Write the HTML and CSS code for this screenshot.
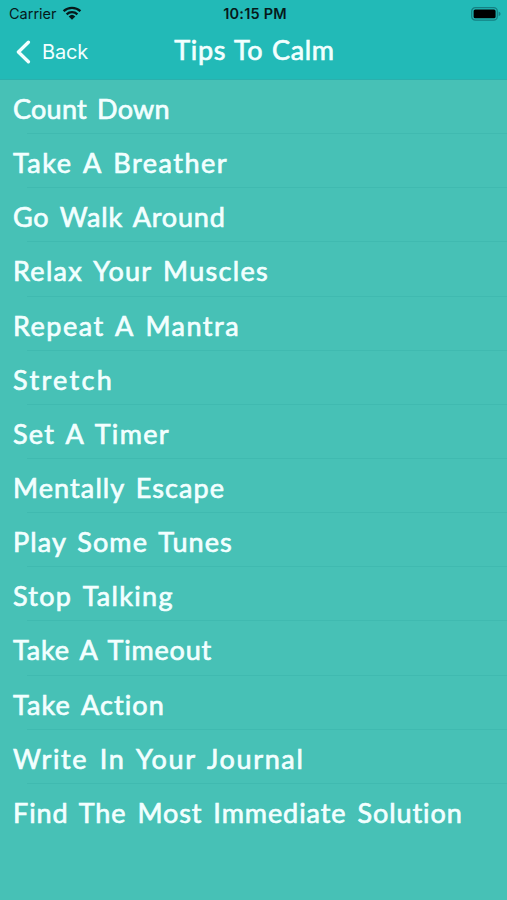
FILE: index.html
```html
<!DOCTYPE html>
<html lang="en">
<head>
    <meta charset="UTF-8">
    <meta name="viewport" content="width=device-width, initial-scale=1.0">
    <title>Tips To Calm</title>
    <link rel="stylesheet" href="styles.css">
</head>
<body>
    <header id="header">
        <div id="status">
            <div class="carrier">
                <span>Carrier</span>
                <svg width="20" height="14" viewBox="0 0 20 14">
                    <path d="M1.6 5.2A12.2 12.2 0 0 1 18.4 5.2M4.6 8.3A7.9 7.9 0 0 1 15.4 8.3" fill="none" stroke="#06191a" stroke-width="2.3"/>
                    <path d="M6.7 10.4A4.8 4.8 0 0 1 13.3 10.4L10 13.7Z" fill="#06191a"/>
                </svg>
            </div>
            <p class="time">10:15 PM</p>
            <svg class="battery" width="30" height="14" viewBox="0 0 30 14">
                <rect x="0.7" y="0.7" width="25.6" height="12.4" rx="3.6" fill="none" stroke="#158083" stroke-width="1.3"/>
                <rect x="2.6" y="2.5" width="22" height="8.8" rx="1.6" fill="#000"/>
                <path d="M27.6 4.6Q29.6 5.4 29.6 7Q29.6 8.5 27.6 9.3Z" fill="#158083"/>
            </svg>
        </div>
        <div id="nav">
            <div class="back">
                <svg width="15" height="24" viewBox="0 0 15 24">
                    <path d="M12.4 2.2L2.4 12L12.4 21.8" fill="none" stroke="#f2ffff" stroke-width="3.3" stroke-linecap="round" stroke-linejoin="round"/>
                </svg>
                <span>Back</span>
            </div>
            <h1>Tips To Calm</h1>
        </div>
    </header>
    <ul id="tips">
        <li>Count Down</li>
        <li>Take A Breather</li>
        <li>Go Walk Around</li>
        <li>Relax Your Muscles</li>
        <li>Repeat A Mantra</li>
        <li>Stretch</li>
        <li>Set A Timer</li>
        <li>Mentally Escape</li>
        <li>Play Some Tunes</li>
        <li>Stop Talking</li>
        <li>Take A Timeout</li>
        <li>Take Action</li>
        <li>Write In Your Journal</li>
        <li>Find The Most Immediate Solution</li>
    </ul>
</body>
</html>
```
FILE: styles.css
```css
*{
    margin: 0;
    padding: 0;
    box-sizing: border-box;
}
body{
    height: 900px;
    overflow: hidden;
    background: #47c1b6;
    color: #f2ffff;
    font-family: Lato, sans-serif;
}
#header{
    height: 80px;
    background: #22bab7;
    border-bottom: 1px solid #2ab0ad;
}
#status{
    height: 27px;
    padding: 0 6px 0 9px;
    display: grid;
    grid-template-columns: 1fr auto 1fr;
    align-items: center;
    color: #06191a;
    font-family: Inter, sans-serif;
    font-size: 14.5px;
}
.carrier{
    display: flex;
    align-items: center;
    gap: 5px;
}
.carrier svg{
    margin-top: -2px;
}
.time{
    font-weight: 600;
    letter-spacing: 0.2px;
}
.battery{
    justify-self: end;
}
#nav{
    height: 50px;
    padding: 0 16px;
    display: grid;
    grid-template-columns: 1fr auto 1fr;
    align-items: center;
}
.back{
    display: flex;
    align-items: center;
    gap: 11px;
    font-family: Inter, sans-serif;
    font-size: 20px;
    letter-spacing: -0.2px;
}
h1{
    padding: 0 0 5px 2px;
    font-size: 27px;
    font-weight: 400;
    letter-spacing: 0.7px;
    word-spacing: 1px;
    -webkit-text-stroke: 0.7px #f2ffff;
}
#tips{
    list-style: none;
}
#tips li{
    height: 54.15px;
    padding: 3px 0 0 13px;
    display: flex;
    align-items: center;
    position: relative;
    font-size: 27px;
    letter-spacing: 1.1px;
    word-spacing: 3px;
    white-space: nowrap;
    -webkit-text-stroke: 0.7px #f2ffff;
}
#tips li:nth-child(1){
    letter-spacing: 0.25px;
}
#tips li:nth-child(2), #tips li:nth-child(5){
    letter-spacing: 1.5px;
}
#tips li:nth-child(3), #tips li:nth-child(11){
    letter-spacing: 0.8px;
}
#tips li:nth-child(4), #tips li:nth-child(7), #tips li:nth-child(10){
    letter-spacing: 1.3px;
}
#tips li:nth-child(6){
    letter-spacing: 2.35px;
}
#tips li:nth-child(13){
    letter-spacing: 1.65px;
}
#tips li:nth-child(14){
    letter-spacing: 0.94px;
}
#tips li:not(:last-child)::after{
    content: "";
    position: absolute;
    left: 27px;
    right: 0;
    bottom: 0;
    height: 1px;
    background: #40bab0;
}
```
